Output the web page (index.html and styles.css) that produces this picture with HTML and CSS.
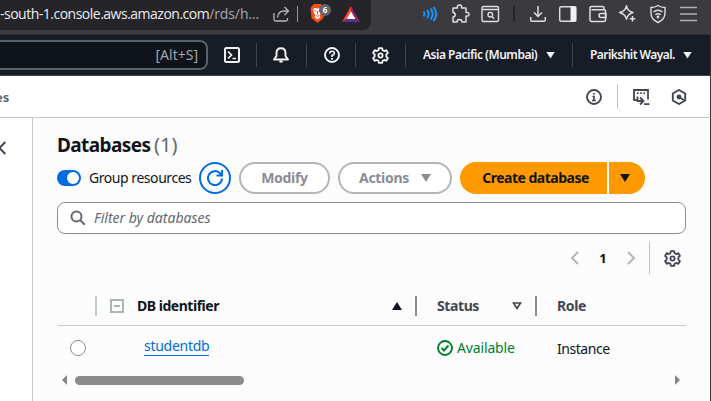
FILE: index.html
```html
<!DOCTYPE html>
<html lang="en">
<head>
<meta charset="utf-8">
<title>Databases</title>
<link rel="stylesheet" href="styles.css">
</head>
<body>
<div class="window">
  <header class="browser">
    <div class="url">
      <span class="address">-south-1.console.aws.amazon.com<span class="path">/rds/h...</span></span>
      <svg class="share" width="18" height="18" viewBox="0 0 18 18" fill="none" stroke="#b5b5b9" stroke-width="1.300"><path d="M2 8v6.500q0 1.500 1.500 1.500h10.500q1.500 0 1.500-1.500V13M5.500 12.500C6 8 8 6 12 6h4M12.500 2l4 4-4 4"/></svg>
      <i class="bar"></i>
      <svg class="brave" width="26" height="24" viewBox="0 0 26 24"><path d="M4 4l2-2h7l2 2 1.500 2-1 10-6 5-6-5-1-10z" fill="#fb4d13"/><path d="M5 7l2-1 2.500.6L12 6l2 1-1 4-1.500 2.500 1 1.500-3 2.500L6.500 15l1-1.500L6 11z" fill="#fff"/><path d="M6.500 8.500l2 .7M12.500 8.500l-2 .7M9.500 9v3.500M8 13.500l1.500 1 1.500-1" stroke="#fb4d13" fill="none"/><circle cx="17" cy="8" r="6" fill="#63646f"/><text x="17" y="11" class="badge">6</text></svg>
      <svg width="20" height="18" viewBox="0 0 20 18"><path d="M10 1L1 17l4.500-3L10 6z" fill="#ff4724"/><path d="M10 1l9 16-4.500-3L10 6z" fill="#9e1f63"/><path d="M1 17h18l-4.500-3h-9z" fill="#662d91"/><path d="M10 6.200l4.500 7.800h-9z" fill="#fff"/></svg>
    </div>
    <div class="tools">
      <span><svg width="18" height="18" viewBox="0 0 18 18" fill="none" stroke="#1495f5" stroke-width="2"><path d="M2.500 6.500q2 2.500 0 5M6 5q3.500 4 0 8M9.500 3.500q4.500 5.500 0 11M12.500 2q5.500 7 0 14"/></svg></span>
      <span><svg width="20" height="20" viewBox="0 0 20 20" fill="none" stroke="#dedee0" stroke-width="1.500" stroke-linejoin="round"><path d="M3 4h4.500q-.8-3 2-3t2 3H16v4.500q3-.5 3 1.800t-3 1.700V18h-4q0-2.500-2.500-2.500T7 18H3v-5q2.200-.2 2.200-2.200T3 8.500z"/></svg></span>
      <span><svg width="20" height="20" viewBox="0 0 20 20" fill="none" stroke="#dedee0" stroke-width="1.400"><rect x="2" y="2.500" width="16.500" height="15" rx="1.500"/><path d="M2 5.500h16.500M12 12.500l2.200 2.200"/><circle cx="10.300" cy="10.700" r="2.300"/></svg></span>
      <i class="dark-bar"></i>
      <span><svg width="20" height="20" viewBox="0 0 20 20" fill="none" stroke="#dedee0" stroke-width="1.500"><path d="M10 2v10M6 8.500l4 4 4-4M2.700 13v3q0 1.300 1.300 1.300h12q1.300 0 1.300-1.300v-3"/></svg></span>
      <span><svg width="20" height="20" viewBox="0 0 20 20"><rect x="1.700" y="2.700" width="16" height="14.600" rx="1.500" fill="none" stroke="#dedee0" stroke-width="1.400"/><path d="M12.500 2.500h5.800v15h-5.800z" fill="#f0f0f2"/></svg></span>
      <span><svg width="20" height="20" viewBox="0 0 20 20" fill="none" stroke="#dedee0" stroke-width="1.500"><path d="M16 5.500V4q0-1.500-1.500-1.500H4Q2 2.500 2 4.200v11.600Q2 17.500 4 17.500h12q1.500 0 1.500-1.500V7q0-1.300-1.500-1.300H3.500M18 9.500h-5q-2 0-2 2t2 2h5z"/></svg></span>
      <span><svg width="20" height="20" viewBox="0 0 20 20" fill="none" stroke="#dedee0" stroke-width="1.500" stroke-linejoin="round"><path d="M8.500 1.800q1 5.200 6.500 6.700-5.500 1.500-6.500 6.700Q7.500 10 1.500 8.500 7.500 7 8.500 1.800zM14.500 12v5.500M11.800 14.800h5.500"/></svg></span>
      <span><svg width="20" height="20" viewBox="0 0 20 20" fill="none" stroke="#dedee0" stroke-width="1.400"><path d="M10 1.500q3 2 7 2V9q0 6.500-7 9.500-7-3-7-9.500V3.500q4 0 7-2zM5.500 8q4.500-3.500 9 0M7.300 10.700q2.700-2 5.400 0"/><circle cx="10" cy="13" r=".7"/></svg></span>
      <span><svg width="20" height="20" viewBox="0 0 20 20" stroke="#b1b1b5" stroke-width="1.600"><path d="M2 3.500h17M2 10h17M2 16.500h17"/></svg></span>
    </div>
  </header>

  <nav class="aws">
    <div class="search">[Alt+S]</div>
    <span class="cell"><svg width="16" height="16" viewBox="0 0 16 16" fill="none" stroke="#f4f4f6" stroke-width="2"><rect x="1" y="1" width="14" height="14" rx="1.500"/><path d="M4 4.500L7.500 8 4 11.500M8.500 11.500H12" stroke-width="1.700"/></svg></span>
    <span class="cell bell"><svg width="16" height="16" viewBox="0 0 16 16" fill="none" stroke="#f4f4f6" stroke-width="1.900" stroke-linejoin="round"><path d="M3.500 9V6Q3.500 1.200 8 1.200T12.500 6v3L15 12.500H1zM6.500 14.200q1.500 1 3 0"/></svg></span>
    <span class="cell help"><svg width="16" height="16" viewBox="0 0 16 16" fill="none" stroke="#f4f4f6" stroke-width="1.900"><circle cx="8" cy="8" r="7"/><path d="M5.700 6.500Q5.700 4.200 8 4.200t2.300 2Q10.300 8 8 8.400V10" stroke-width="1.600"/><path d="M8 11v1.700"/></svg></span>
    <span class="cell"><svg width="17" height="17" viewBox="0 0 16 16" fill="none" stroke="#f4f4f6" stroke-width="1.700" stroke-linejoin="round"><path d="M6.500 1h3l.5 2 1.500.8 2-.8L15 5.600 13.500 7v2l1.500 1.400-1.500 2.600-2-.8-1.500.8-.5 2h-3L6 13l-1.500-.8-2 .8L1 10.400 2.500 9V7L1 5.600 2.500 3l2 .8L6 3z"/><circle cx="8" cy="8" r="2"/></svg></span>
    <span class="region"><b class="region-name">Asia Pacific (Mumbai)</b><i class="tri"></i></span>
    <span class="account"><b class="account-name">Parikshit Wayal.</b><i class="tri"></i></span>
  </nav>

  <div class="crumbs">
    <b class="crumb">es</b>
    <svg class="info" width="16" height="16" viewBox="0 0 16 16" fill="none" stroke="#424650" stroke-width="1.900"><circle cx="8" cy="8" r="7"/><path d="M8 4v1.800M6.500 7.500H8V11M6 11.500h4" stroke-width="1.600"/></svg>
    <i class="rule"></i>
    <svg class="shell" width="18" height="18" viewBox="0 0 18 18" fill="none" stroke="#424650" stroke-width="1.900"><path d="M4.500 12H2V2h14v9.500M5 5.200h1.600M8.200 5.200h1.600M11.400 5.200H13M5.500 8.500V13H11M8 9.500l3.500 3.500L8 16.500M12 16.200h5.500" stroke-width="1.800"/></svg>
    <svg width="16" height="16" viewBox="0 0 16 16" fill="none" stroke="#424650" stroke-width="1.900"><path d="M8 1l6.200 3.500v7L8 15l-6.200-3.500v-7z"/><path d="M8 8l5 3"/><circle cx="8" cy="8" r="1.500" fill="#424650"/></svg>
  </div>

  <div class="body">
    <aside><svg width="6" height="14" viewBox="0 0 6 14" fill="none" stroke="#424650" stroke-width="1.900"><path d="M5.300 1L-.5 7l5.800 6"/></svg></aside>
    <main>
      <h1><span class="title">Databases</span><span class="count">(1)</span></h1>
      <div class="actions">
        <span class="toggle"></span>
        <span class="group">Group resources</span>
        <span class="refresh"><svg width="16" height="16" viewBox="0 0 16 16" fill="none" stroke="#006ce0" stroke-width="2"><path d="M15 8.500A7 7 0 1 1 13 3.200L14.500 5M15 0v5.500H9.500"/></svg></span>
        <span class="btn modify"><b>Modify</b></span>
        <span class="btn menu"><b>Actions</b><i class="tri"></i></span>
        <span class="create"><b>Create database</b></span>
        <span class="split"><i class="tri"></i></span>
      </div>
      <div class="filter"><svg width="16" height="16" viewBox="0 0 16 16" fill="none" stroke="#656871" stroke-width="2"><circle cx="6.500" cy="6.500" r="5"/><path d="M10 10l4.800 4.800"/></svg><em>Filter by databases</em></div>
      <div class="pager">
        <svg width="10" height="14" viewBox="0 0 10 14" fill="none" stroke="#b4b4bb" stroke-width="2"><path d="M8 1L2 7l6 6"/></svg>
        <b>1</b>
        <svg width="10" height="14" viewBox="0 0 10 14" fill="none" stroke="#b4b4bb" stroke-width="2"><path d="M2 1l6 6-6 6"/></svg>
        <i class="rule"></i>
        <svg width="17" height="17" viewBox="0 0 16 16" fill="none" stroke="#424650" stroke-width="1.700" stroke-linejoin="round"><path d="M6.500 1h3l.5 2 1.500.8 2-.8L15 5.600 13.500 7v2l1.500 1.400-1.500 2.600-2-.8-1.500.8-.5 2h-3L6 13l-1.500-.8-2 .8L1 10.400 2.500 9V7L1 5.600 2.500 3l2 .8L6 3z"/><circle cx="8" cy="8" r="2"/></svg>
      </div>
      <div class="grid head">
        <span class="pick"></span>
        <span class="col id"><i class="box"></i><b class="id-label">DB identifier</b><svg width="10" height="8" viewBox="0 0 10 8"><path d="M5 0l5 8H0z" fill="#0f141a"/></svg></span>
        <span class="col status"><b class="status-label">Status</b><svg width="10" height="8" viewBox="0 0 10 8"><path d="M1.500 1h7L5 6.500z" fill="none" stroke="#424650" stroke-width="1.600"/></svg></span>
        <span class="col role"><b>Role</b></span>
      </div>
      <div class="grid row">
        <span class="pick"><i class="radio"></i></span>
        <span class="name"><a>studentdb</a></span>
        <span class="state"><svg width="16" height="16" viewBox="0 0 16 16" fill="none" stroke="#00802f" stroke-width="1.900"><circle cx="8" cy="8" r="7"/><path d="M4.500 8L7 10.500 11.500 5.500"/></svg><span class="available">Available</span></span>
        <span class="instance">Instance</span>
      </div>
      <div class="scroll"><svg width="5" height="10" viewBox="0 0 5 10"><path d="M5 0v10L0 5z" fill="#858585"/></svg><i class="thumb"></i><svg width="5" height="10" viewBox="0 0 5 10"><path d="M0 0v10l5-5z" fill="#858585"/></svg></div>
    </main>
  </div>
</div>
</body>
</html>
```
FILE: styles.css
```css
* { box-sizing: border-box; }
body { margin: 0; overflow: hidden; font: 14px/20px "Noto Sans", "Open Sans", sans-serif; color: #0f141a; }
b { font-weight: 700; }
i { flex: none; display: block; }
svg { flex: none; display: block; }
.window { width: 711px; height: 401px; background: #fff; white-space: nowrap; display: flex; flex-direction: column; }

.browser { height: 35px; flex: none; background: #3b3a3f; border-bottom: 1px solid #303035; display: flex; }
.url { width: 371px; height: 30px; background: #252429; border-radius: 0 0 8px 0; display: flex; align-items: center; padding-bottom: 2px; }
.address { width: 272px; flex: none; font: 14px/20px "Open Sans", sans-serif; letter-spacing: -0.5px; color: #ececee; }
.path { color: #a9a9ad; letter-spacing: -0.1px; }
.bar { width: 1px; height: 16px; background: #97979b; margin: 0 10px 0 7px; }
.brave { margin-right: 7px; }
.badge { font: 700 8px "Open Sans", sans-serif; fill: #fff; text-anchor: middle; }
.tools { margin-left: 44px; height: 28px; display: flex; align-items: center; }
.tools span { width: 30px; display: flex; justify-content: center; }
.dark-bar { width: 2px; height: 16px; background: #252429; margin: 0 8px; }

.aws { height: 41px; flex: none; background: #161d26; border-right: 1px solid #33363b; border-bottom: 1px solid #424650; display: flex; align-items: center; color: #f3f3f7; }
.search { width: 208px; height: 30px; border: 2px solid #5c6068; border-left: 0; border-radius: 0 8px 8px 0; background: #0f141a; color: #a4a4ad; font-size: 14px; line-height: 26px; text-align: right; padding-right: 8px; }
.cell { width: 50px; height: 24px; border-right: 1px solid #3e434c; display: flex; align-items: center; justify-content: center; }
.search + .cell, .help { width: 49px; }
.bell { padding-right: 1px; }
.help { padding-left: 1px; }
.tri { width: 9px; height: 7px; background: currentColor; clip-path: polygon(0 0, 100% 0, 50% 100%); }
.region { width: 167px; height: 24px; border-right: 1px solid #3e434c; padding-left: 17px; display: flex; align-items: center; font-size: 12px; }
.region b, .account b { font-weight: 600; }
.region-name { width: 123px; letter-spacing: -0.48px; }
.account { padding-left: 17px; display: flex; align-items: center; font-size: 12px; }
.account-name { width: 93px; letter-spacing: -0.55px; }

.crumbs { height: 42px; flex: none; border-bottom: 1px solid #c6c6cd; border-right: 1px solid #33363b; display: flex; align-items: center; }
.crumb { width: 586px; margin-left: -5px; color: #656871; font-size: 13px; }
.info { margin-left: 5px; }
.rule { width: 1px; background: #c0c0c8; }
.crumbs .rule { height: 25px; margin: 0 14px 0 15px; }
.shell { margin-right: 21px; }

.body { flex: 1; display: flex; border-right: 1px solid #33363b; background: #fcfcfd; }
aside { width: 33px; flex: none; background: #fff; border-right: 1px solid #c6c6cd; padding-top: 23px; }
main { width: 653px; padding: 15px 0 0 24px; flex: none; }
h1 { margin: 0; height: 24px; font-size: 20px; line-height: 24px; font-weight: 700; display: flex; }
.title { width: 97px; font-size: 19px; letter-spacing: -0.6px; }
.count { font-weight: 400; color: #656871; }
.actions { height: 32px; margin-top: 5px; display: flex; align-items: center; }
.toggle { width: 24px; height: 16px; border-radius: 8px; background: #006ce0; padding: 2px; display: flex; justify-content: flex-end; }
.toggle::after { content: ""; width: 12px; height: 12px; border-radius: 50%; background: #fff; }
.group { width: 110px; margin-left: 8px; letter-spacing: -0.45px; }
.refresh { width: 32px; height: 32px; border: 2px solid #006ce0; border-radius: 50%; background: #fff; display: flex; align-items: center; justify-content: center; }
.btn { height: 32px; margin-left: 8px; border: 2px solid #b4b4bb; border-radius: 16px; background: #fff; color: #8c8c94; display: flex; align-items: center; justify-content: center; letter-spacing: -0.3px; }
.modify { width: 91px; }
.menu { width: 114px; gap: 12px; }
.actions .tri { width: 10px; height: 8px; }
.create, .split { height: 32px; background: #ff9900; display: flex; align-items: center; justify-content: center; }
.create { width: 147px; margin-left: 8px; border-radius: 16px 0 0 16px; padding-left: 4px; letter-spacing: -0.5px; }
.split { width: 36px; margin-left: 2px; border-radius: 0 16px 16px 0; padding-right: 4px; }
.filter { width: 629px; height: 32px; margin-top: 8px; border: 1px solid #8c8c94; border-radius: 8px; background: #fff; display: flex; align-items: center; padding-left: 12px; gap: 8px; color: #656871; }
.pager { height: 32px; margin-top: 8px; display: flex; align-items: center; justify-content: flex-end; padding-right: 5px; }
.pager b { width: 46px; text-align: center; font-size: 13px; }
.pager .rule { height: 32px; margin: 0 14px 0 13px; }
.grid { width: 628px; margin-left: 1px; display: grid; grid-template-columns: 37px 320px 120px 151px; align-items: center; }
.head { height: 40px; margin-top: 12px; border-bottom: 1px solid #c6c6cd; }
.col { height: 20px; border-left: 2px solid #8c8c94; display: flex; align-items: center; color: #424650; }
.id { border-color: #c6c6cd; color: #0f141a; }
.box { width: 14px; height: 14px; border: 2px solid #aab7b8; background: linear-gradient(#aab7b8, #aab7b8) center / 6px 2px no-repeat; margin: 0 13px 0 13px; }
.id-label { width: 255px; letter-spacing: -0.48px; }
.status, .role { padding-left: 20px; letter-spacing: -0.4px; }
.status-label { width: 75px; }
.row { height: 44px; }
.pick { padding-left: 12px; }
.radio { width: 16px; height: 16px; border: 1px solid #8c8c94; border-radius: 50%; background: #fff; }
.name { padding-left: 49px; display: flex; }
a { height: 19px; margin-top: -3px; line-height: 17px; letter-spacing: -0.28px; color: #006ce0; border-bottom: 1px solid #006ce0; }
.state { padding-left: 22px; display: flex; align-items: center; gap: 4px; color: #00802f; letter-spacing: -0.15px; }
.instance { padding: 2px 0 0 22px; letter-spacing: -0.45px; }
.scroll { height: 20px; display: flex; align-items: center; padding-left: 5px; }
.thumb { width: 169px; height: 9px; border-radius: 5px; background: #8b8b8b; margin: 0 431px 0 8px; }
```
